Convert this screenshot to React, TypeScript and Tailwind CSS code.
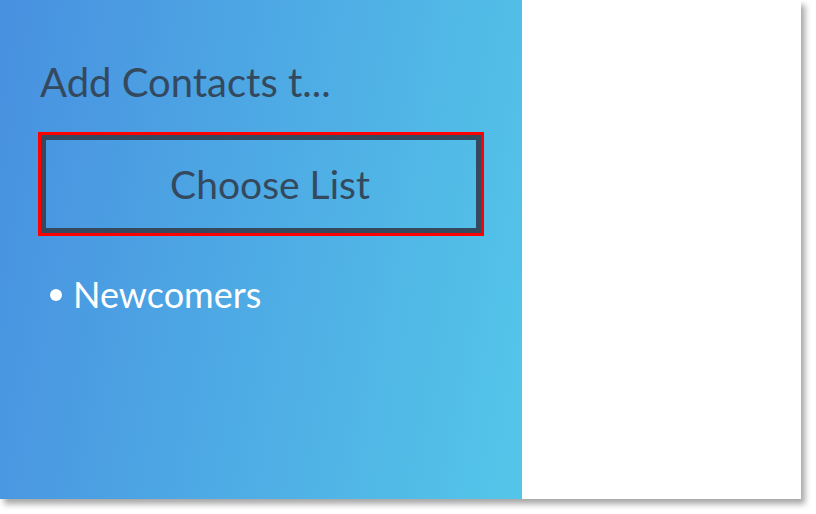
export default function App() {
  return (
    <div className="w-[816px] h-[514px] bg-white font-['Lato',sans-serif]">
      <div className="flex w-[801px] h-[499px] bg-white shadow-[4px_5px_6px_rgba(0,0,0,0.35)]">
        <div className="w-[522px] h-full bg-[linear-gradient(100deg,#4890e0,#54c6e9)] pl-[38px] pt-[60px]">
          <h1 className="pl-[2px] text-[40px] leading-[44px] text-[#34495e]">Add Contacts t...</h1>
          <button className="mt-[28px] w-[446px] h-[104px] border-[3px] border-[#ff0000] bg-transparent">
            <div className="flex h-full items-center justify-center border-[5px] border-[#34495e] pl-[18px] text-[39px] text-[#34495e]">
              Choose List
            </div>
          </button>
          <ul className="mt-[38px] pl-[12px] text-[36px] leading-[40px] text-white">
            <li className="flex items-center gap-[11px]">
              <span className="mt-[2px] h-[12px] w-[12px] rounded-full bg-white" />
              Newcomers
            </li>
          </ul>
        </div>
        <div className="flex-1 bg-white" />
      </div>
    </div>
  );
}
